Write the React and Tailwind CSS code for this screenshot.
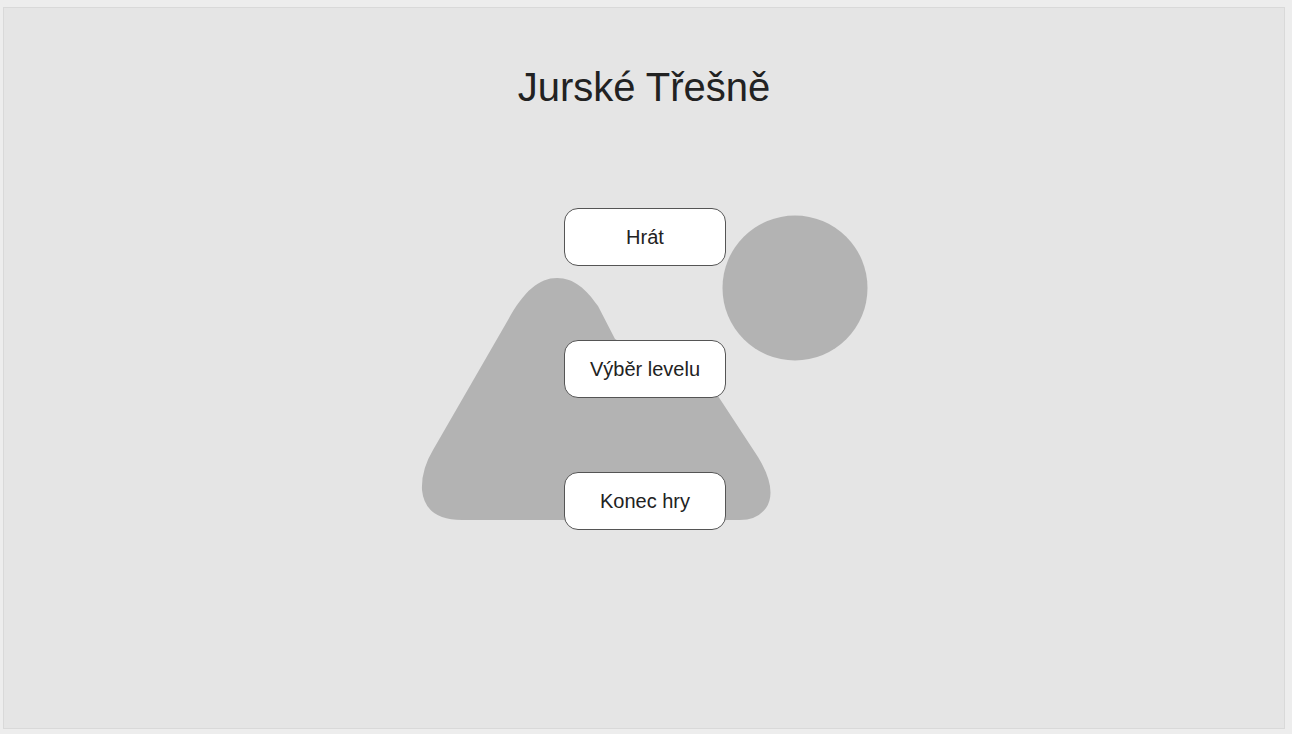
import React from "react";

const menuItems = ["Hrát", "Výběr levelu", "Konec hry"];

// placeholder artwork behind the menu (page coordinates via viewBox)
const Artwork = () => (
  <svg
    className="absolute inset-0 w-full h-full pointer-events-none"
    viewBox="4 8 1280 720"
    fill="#b3b3b3"
  >
    <path d="M557 278 C574 278 586 289 598 306 L615 339 L718 396 L758 457 Q778 490 766 508 Q757 520 740 520 L462 520 Q425 520 422 490 Q421 470 433 450 L508 320 C524 291 539 278 557 278 Z" />
    <circle cx="795" cy="288" r="72.5" />
  </svg>
);

const App = () => {
  return (
    <div className="w-full h-screen bg-[#ededed] pt-[7px] pl-[3px] font-['Liberation_Sans',Arial,sans-serif]">
      <div className="relative w-[1282px] h-[722px] border border-[#d9d9d9] bg-[#e5e5e5] flex flex-col items-center">
        <Artwork />
        <h1 className="relative pt-[56px] text-[40px] leading-[46px] text-[#222222]">
          Jurské Třešně
        </h1>
        <div className="relative flex flex-col items-center gap-[74px] mt-[98px] pl-[2px]">
          {menuItems.map((item, index) => (
            <button
              key={index}
              className="w-[162px] h-[58px] flex items-center justify-center rounded-[14px] border border-[#555555] bg-white text-[20px] leading-[23px] text-[#222222] cursor-pointer"
            >
              {item}
            </button>
          ))}
        </div>
      </div>
    </div>
  );
};

export default App;
